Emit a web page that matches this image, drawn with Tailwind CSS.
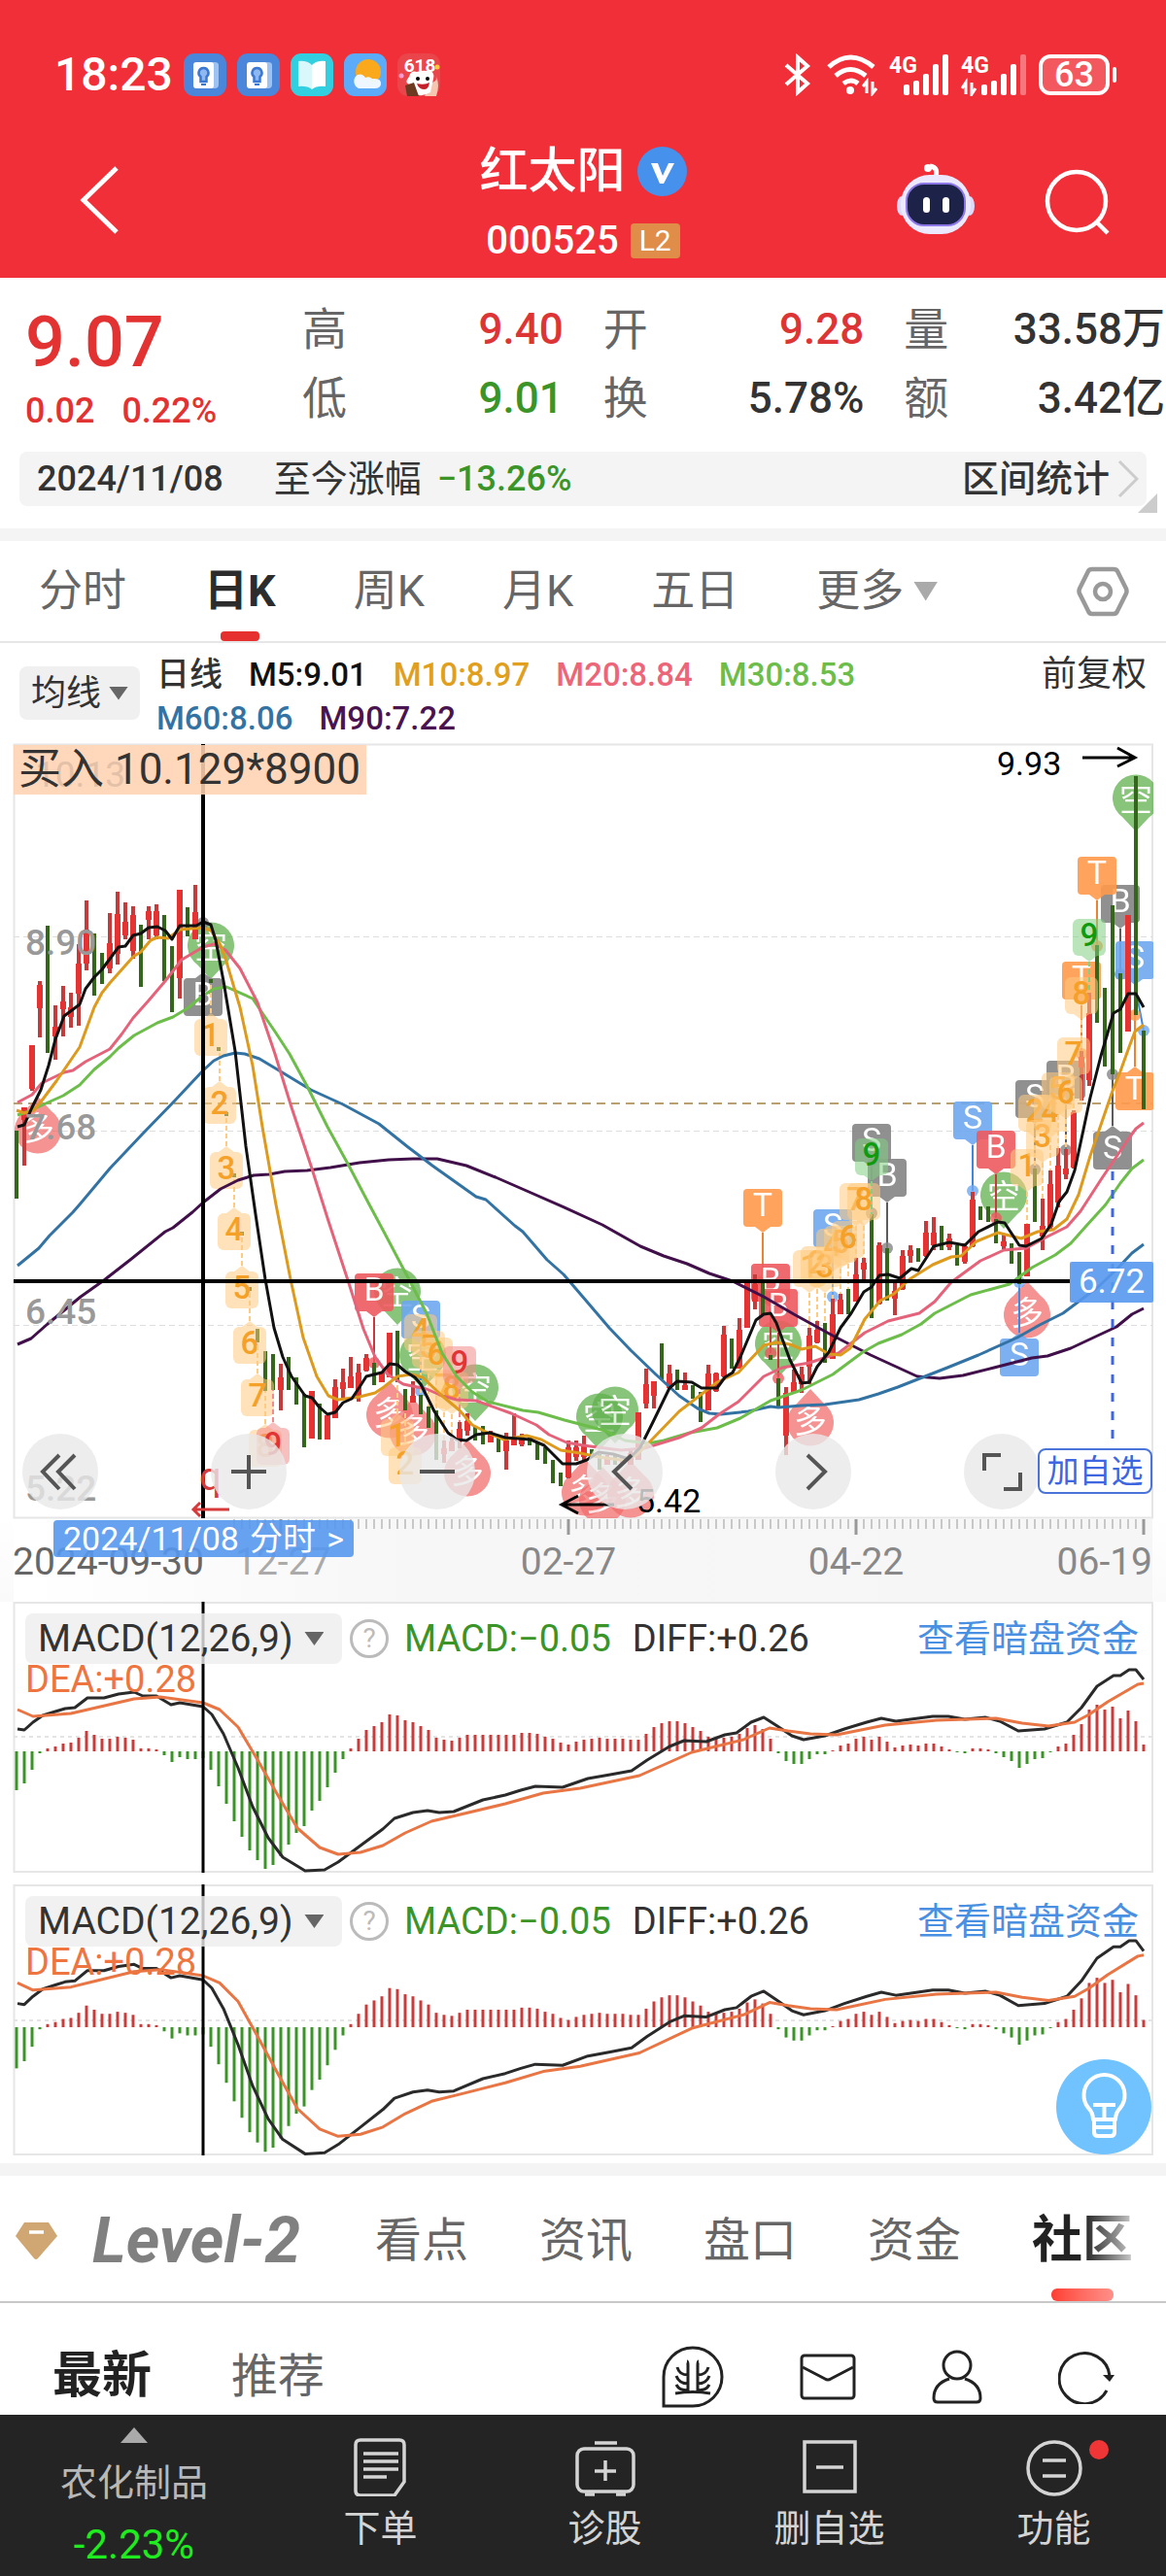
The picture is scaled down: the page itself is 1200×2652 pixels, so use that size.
<!DOCTYPE html>
<html lang="zh-CN">
<head>
<meta charset="utf-8">
<meta name="viewport" content="width=device-width, initial-scale=1">
<title>红太阳 000525</title>
<script src="https://cdn.jsdelivr.net/npm/@tailwindcss/browser@4"></script>
</head>
<body class="bg-white text-[#333] font-['Roboto','Noto_Sans_CJK_SC',sans-serif] overflow-x-hidden">

<header class="bg-[#f12f38] text-white h-[286px] flex flex-col">
  <div class="h-[152px] flex items-center justify-between pl-14 pr-[51px] pt-[2px]">
    <div class="flex items-center gap-[11px]">
      <span class="text-[48px] leading-[44px] font-medium">18:23</span>
      <svg class="size-11" viewBox="0 0 44 44"><rect width="44" height="44" rx="11" fill="#4a86da"/><path d="M14 9h18q4 0 4 3v20q0 4-4 4H14z" fill="#9cc3f3"/><rect x="10" y="9" width="21" height="27" rx="3" fill="#fff"/><path d="M20.500 15a5 5 0 0 0-3 9v5h6v-5a5 5 0 0 0-3-9z" fill="#8fb8f0" stroke="#3b78d2" stroke-width="2.500"/><path d="M18 32h5" stroke="#3b78d2" stroke-width="2"/></svg>
      <svg class="size-11" viewBox="0 0 44 44"><rect width="44" height="44" rx="11" fill="#4a86da"/><path d="M14 9h18q4 0 4 3v20q0 4-4 4H14z" fill="#9cc3f3"/><rect x="10" y="9" width="21" height="27" rx="3" fill="#fff"/><path d="M20.500 15a5 5 0 0 0-3 9v5h6v-5a5 5 0 0 0-3-9z" fill="#8fb8f0" stroke="#3b78d2" stroke-width="2.500"/><path d="M18 32h5" stroke="#3b78d2" stroke-width="2"/></svg>
      <svg class="size-11" viewBox="0 0 44 44"><rect width="44" height="44" rx="11" fill="#32cfe0"/><path d="M22 12q-5-5-14-4v26q9-1 14 3z" fill="#d8f8fc"/><path d="M22 12q5-5 14-4v26q-9-1-14 3z" fill="#fff"/></svg>
      <svg class="size-11" viewBox="0 0 44 44"><rect width="44" height="44" rx="11" fill="#5cabf8"/><circle cx="25" cy="19" r="13" fill="#fba91c"/><path d="M15 36a8 8 0 0 1-1-14q5-2 8 3 4-2 7 1 10-1 9 6-1 4-6 4z" fill="#eef7ff"/></svg>
      <svg class="size-11" viewBox="0 0 44 44"><rect width="44" height="44" rx="11" fill="#e9454a"/><path d="M33 30q8 0 7-6 4 8 0 20h-12z" fill="#f6c6b0"/><text x="23" y="19" font-size="19" font-weight="700" fill="#fff" text-anchor="middle">618</text><path d="M12 24q2-7 8-5 6-2 11-1 8 0 6 8l-3 14q-8 5-16 2l-4-10q-8-1-2-8z" fill="#fff"/><circle cx="21" cy="26" r="2"/><circle cx="31" cy="26" r="2"/><path d="M20 31q8 2 13-1-1 7-5 7-6 0-8-6z" fill="#c3202a"/><path d="M8 33l9-3 5 14H10z" fill="#6b3a20"/><circle cx="41" cy="14" r="2.500" fill="#ffc93b"/><circle cx="4" cy="23" r="2.500" fill="#ff9bd0"/></svg>
    </div>
    <div class="flex items-center gap-3">
      <svg class="w-8 h-11" viewBox="0 0 32 44" fill="none" stroke="#fff" stroke-width="4"><path d="M3 12l22 19-10 9V4l10 9L3 32"/></svg>
      <svg class="w-[53px] h-11" viewBox="0 0 53 44" fill="none" stroke="#fff" stroke-width="5"><path d="M3 14q22-20 46 0M10 23q15-13 31 0M18 31q8-6 15 0" /><circle cx="25" cy="38" r="4" fill="#fff" stroke="none"/><path d="M42 41V29l-4 5M48 29v12l4-5" stroke-width="3"/></svg>
      <svg class="w-[62px] h-11" viewBox="0 0 62 44" fill="#fff"><text x="0" y="20" font-size="23" font-weight="700">4G</text><rect x="15" y="32" width="6" height="11" rx="2"/><rect x="25" y="28" width="6" height="15" rx="2"/><rect x="35" y="21" width="6" height="22" rx="2"/><rect x="45" y="11" width="6" height="32" rx="2"/><rect x="55" y="1" width="6" height="42" rx="2"/></svg>
      <svg class="w-[68px] h-11" viewBox="0 0 68 44" fill="#fff"><text x="0" y="20" font-size="23" font-weight="700">4G</text><path d="M5 42V30l-4 6M11 30v12l4-6" stroke="#fff" stroke-width="3" fill="none"/><rect x="21" y="32" width="6" height="11" rx="2"/><rect x="31" y="28" width="6" height="15" rx="2"/><rect x="41" y="21" width="6" height="22" rx="2"/><rect x="51" y="11" width="6" height="32" rx="2"/><rect x="61" y="1" width="6" height="42" rx="2" fill-opacity=".35"/></svg>
      <div class="flex items-center gap-[3px]">
        <span class="w-[73px] h-[42px] rounded-xl border-4 border-white bg-white/20 flex items-center justify-center text-[36px] leading-none font-medium">63</span>
        <i class="w-1 h-4 rounded bg-white"></i>
      </div>
    </div>
  </div>
  <div class="flex-1 grid grid-cols-3 items-start">
    <button class="ml-[78px] mt-[18px] w-12 h-[72px]" aria-label="返回"><svg viewBox="0 0 48 72" fill="none" stroke="#fff" stroke-width="5"><path d="M42 3L8 36l34 33"/></svg></button>
    <div class="flex flex-col items-center">
      <h1 class="flex items-center gap-3 text-[50px] leading-[52px] font-medium -mt-[2px]">红太阳
        <svg class="size-[51px]" viewBox="0 0 51 51"><circle cx="25.500" cy="25.500" r="25.500" fill="#4691ec"/><path d="M14 17h7l5 13 6-13h6L27 38h-4z" fill="#fff"/></svg></h1>
      <p class="flex items-center gap-3 mt-5 text-[40px] leading-[52px] font-medium">000525 <span class="w-[51px] h-9 rounded-sm bg-[#e08d49] text-[30px] leading-9 font-normal text-center">L2</span></p>
    </div>
    <div class="flex justify-end gap-[70px] pr-[56px] mt-4">
      <button aria-label="智能助手"><svg class="w-[82px] h-[76px]" viewBox="0 0 82 76"><path d="M41 14q3-10-6-11" stroke="#fff" stroke-width="5" fill="none"/><circle cx="33" cy="5" r="4" fill="#fff"/><ellipse cx="6" cy="44" rx="5" ry="10" fill="#dcd9fb"/><ellipse cx="76" cy="44" rx="5" ry="10" fill="#dcd9fb"/><rect x="5" y="12" width="72" height="61" rx="30" fill="#ece9ff"/><rect x="11" y="21" width="60" height="43" rx="18" fill="#1d2348" stroke="#8d77e8" stroke-width="2"/><rect x="28" y="35" width="7" height="16" rx="3.500" fill="#fff"/><rect x="48" y="35" width="7" height="16" rx="3.500" fill="#fff"/></svg></button>
      <button aria-label="搜索" class="pt-[5px]"><svg class="size-[70px]" viewBox="0 0 70 70" fill="none" stroke="#fff" stroke-width="4.500"><circle cx="34" cy="33" r="30"/><path d="M55 55l11 11"/></svg></button>
    </div>
  </div>
</header>

<section class="flex h-[179px]">
  <div class="w-[311px] pl-[26px] pt-[29px] text-[#e23232]">
    <p class="text-[72px] leading-[76px] font-medium">9.07</p>
    <p class="text-[36px] leading-[40px] mt-3 flex gap-7 font-medium"><span>0.02</span><span>0.22%</span></p>
  </div>
  <dl class="flex-1 grid grid-cols-3 gap-x-[41px] content-start pt-[18px] pr-px text-[44px] leading-[71px] font-medium">
    <div class="flex justify-between"><dt class="text-[#666] text-[46px] font-normal">高</dt><dd class="text-[#dd3535]">9.40</dd></div>
    <div class="flex justify-between"><dt class="text-[#666] text-[46px] font-normal">开</dt><dd class="text-[#dd3535]">9.28</dd></div>
    <div class="flex justify-between"><dt class="text-[#666] text-[46px] font-normal">量</dt><dd>33.58万</dd></div>
    <div class="flex justify-between"><dt class="text-[#666] text-[46px] font-normal">低</dt><dd class="text-[#3a9427]">9.01</dd></div>
    <div class="flex justify-between"><dt class="text-[#666] text-[46px] font-normal">换</dt><dd>5.78%</dd></div>
    <div class="flex justify-between"><dt class="text-[#666] text-[46px] font-normal">额</dt><dd>3.42亿</dd></div>
  </dl>
</section>
<section class="relative mx-5 h-14 rounded-lg bg-[#f4f4f4] flex items-center pl-[18px] pr-2 text-[36px] font-medium">
  <span>2024/11/08</span><span class="ml-[52px] text-[38px] font-normal">至今涨幅</span><span class="ml-4 text-[#3a9427]">−13.26%</span>
  <a href="#" class="ml-auto flex items-center gap-2 text-[38px]">区间统计<svg class="w-[22px] h-10" viewBox="0 0 22 40" fill="none" stroke="#ccc" stroke-width="3"><path d="M2 2l18 18L2 38"/></svg></a>
  <i class="absolute -right-[11px] -bottom-[7px] size-5 bg-[#ccc] [clip-path:polygon(100%_0,100%_100%,0_100%)]"></i>
</section>
<div class="mt-[23px] h-[13px] bg-[#f4f4f4]"></div>

<nav class="h-[105px] border-b-2 border-[#e6e6e6] flex items-center gap-20 pl-10 pr-[38px] text-[45px] leading-[48px] text-[#666]">
  <a href="#">分时</a>
  <a href="#" class="relative h-full flex items-center font-bold text-[#2c2c2c]">日K<i class="absolute bottom-0 left-1/2 -translate-x-1/2 w-10 h-[10px] rounded bg-[#e6302f]"></i></a>
  <a href="#">周K</a><a href="#">月K</a><a href="#">五日</a>
  <a href="#" class="flex items-center gap-[10px]">更多<i class="w-[25px] h-5 bg-[#aaa] [clip-path:polygon(0_0,100%_0,50%_100%)]"></i></a>
  <button class="ml-auto" aria-label="设置"><svg class="w-[54px] h-[52px]" viewBox="0 0 54 52" fill="none" stroke="#999" stroke-width="4.500"><path d="M16 3h22q3 0 4 2l9 18q1 3 0 5l-9 18q-1 3-4 3H16q-3 0-4-3L3 28q-1-2 0-5l9-18q1-2 4-2z"/><circle cx="27" cy="26" r="8"/></svg></button>
</nav>

<section class="h-[103px] flex items-start pl-5 pr-[20px]">
  <button class="mt-6 w-[124px] h-[55px] rounded-lg bg-[#f0f0f0] flex items-center justify-center gap-2 text-[36px]">均线<i class="w-5 h-[14px] bg-[#666] [clip-path:polygon(0_0,100%_0,50%_100%)]"></i></button>
  <div class="ml-[17px] mt-[10px] flex-1 flex flex-wrap gap-x-[27px] text-[33px] leading-[45px] font-medium">
    <span class="text-[34px]">日线</span><span class="text-[#111]">M5:9.01</span><span class="text-[#e0a01e]">M10:8.97</span><span class="text-[#ec6578]">M20:8.84</span><span class="text-[#6cbd4a]">M30:8.53</span>
    <i class="basis-full h-0"></i>
    <span class="text-[#3373a4]">M60:8.06</span><span class="text-[#4a1450]">M90:7.22</span>
  </div>
  <button class="mt-[10px] text-[36px] leading-[45px]">前复权</button>
</section>

<main>
  <section class="relative bg-linear-to-b from-white from-90% to-[#fafafa]">
    <svg id="kline" class="block w-full h-auto" viewBox="0 765 1200 884" role="img" aria-label="日K线图">
      <defs>
        <linearGradient id="rulerFade" x1="0" x2="1"><stop offset="0" stop-color="#fff"/><stop offset=".35" stop-color="#f7f7f7"/><stop offset="1" stop-color="#f6f6f6"/></linearGradient>
        <clipPath id="plot"><rect x="14" y="766" width="1173" height="797"/></clipPath>
      </defs>
      <rect x="14" y="1564" width="1172" height="85" fill="url(#rulerFade)"/>
      <rect x="14.500" y="766.500" width="1171.500" height="796" fill="#fff" stroke="#e6e6e6" stroke-width="2"/>
      <g stroke="#dedede" stroke-dasharray="6 4"><path d="M14 964.500H1186M14 1164.500H1186M14 1364.500H1186"/></g>
      <path d="M14 1136H1186" stroke="#b9a070" stroke-width="2" stroke-dasharray="9 6"/>
      <g id="plotLayer" clip-path="url(#plot)"></g>
      <g font-size="37" font-weight="500" fill="#999"><text x="26" y="983">8.90</text><text x="26" y="1173">7.68</text><text x="26" y="1363">6.45</text><text x="26" y="1545">5.22</text></g>
      <path d="M1145 1206V1491" stroke="#3e66e0" stroke-width="3" stroke-dasharray="9 10"/>
      <g fill="none" stroke="#000"><path d="M209 766V1563" stroke-width="4"/><path d="M14 1319H1101" stroke-width="4"/><path d="M1114 780h54M1150 770l18 10-18 9M578 1549h54M595 1540l-17 9 17 9" stroke-width="3"/></g>
      <path d="M199 1554h37M206 1547l-7 7 7 7" stroke="#d63a3a" stroke-width="3" fill="none"/>
      <text x="205" y="1534" font-size="40" fill="#d63a3a">q</text>
      <rect x="14" y="767" width="363" height="51" fill="#ffd2b0" fill-opacity=".88"/>
      <text x="36" y="810" font-size="37" fill="#e3c0a8">10.13</text>
      <text x="19" y="807" font-size="44" fill="#333">买入 10.129*8900</text>
      <g font-size="34" fill="#000"><text x="1026" y="798">9.93</text><text x="655" y="1557">5.42</text></g>
      <rect x="1101" y="1299" width="86" height="42" rx="2" fill="#5698ee" fill-opacity=".9"/>
      <text x="1144" y="1331" font-size="35" fill="#fff" text-anchor="middle">6.72</text>
      <g id="ruler"></g>
      <g font-size="39" fill="#888"><text x="13" y="1621" fill="#666">2024-09-30</text><text x="242" y="1621" fill="#aaa">12-27</text><text x="585" y="1621" text-anchor="middle">02-27</text><text x="881" y="1621" text-anchor="middle">04-22</text><text x="1186" y="1621" text-anchor="end">06-19</text></g>
    </svg>
    <a href="#" class="absolute left-[55px] top-[800px] w-[309px] h-[38px] rounded-sm bg-[#5698ee]/90 text-white text-[34px] leading-[38px] flex justify-between px-[10px]"><span>2024/11/08</span><span>分时</span><span>&gt;</span></a>
    <div class="absolute left-[23px] right-[130px] top-[711px] flex justify-between text-[#555]">
      <button class="size-[78px] rounded-full bg-[#e8e8e8]/80" aria-label="最左"><svg viewBox="0 0 78 78" fill="none" stroke="currentColor" stroke-width="4"><path d="M38 22L21 39l17 18M54 22L37 39l17 18"/></svg></button>
      <button class="size-[78px] rounded-full bg-[#e8e8e8]/80" aria-label="放大"><svg viewBox="0 0 78 78" fill="none" stroke="currentColor" stroke-width="4"><path d="M39 22v35M21 39h36"/></svg></button>
      <button class="size-[78px] rounded-full bg-[#e8e8e8]/80" aria-label="缩小"><svg viewBox="0 0 78 78" fill="none" stroke="currentColor" stroke-width="4"><path d="M21 39h36"/></svg></button>
      <button class="size-[78px] rounded-full bg-[#e8e8e8]/80" aria-label="向左"><svg viewBox="0 0 78 78" fill="none" stroke="currentColor" stroke-width="4"><path d="M46 22L28 39l18 18"/></svg></button>
      <button class="size-[78px] rounded-full bg-[#e8e8e8]/80" aria-label="向右"><svg viewBox="0 0 78 78" fill="none" stroke="currentColor" stroke-width="4"><path d="M33 22l18 17-18 18"/></svg></button>
      <button class="size-[78px] rounded-full bg-[#e8e8e8]/80" aria-label="全屏"><svg viewBox="0 0 78 78" fill="none" stroke="currentColor" stroke-width="4"><path d="M21 38V22h17M58 40v17H41"/></svg></button>
    </div>
    <button class="absolute right-[14px] top-[726px] w-[118px] h-[47px] rounded-lg border-2 border-[#4a74d8] bg-white text-[#3e66e0] text-[33px] leading-10 flex items-center justify-center">加自选</button>
  </section>

  <section class="relative">
    <svg class="macd block w-full h-auto" data-scale="1" data-zero="154" data-mid="139" viewBox="0 0 1200 279" role="img" aria-label="MACD"></svg>
    <div class="absolute inset-x-0 top-3 pl-[26px] pr-[28px] text-[38px] leading-[52px]">
      <div class="flex items-center">
        <button class="w-[326px] h-[52px] rounded-lg bg-[#eee]/80 flex items-center gap-3 pl-[13px] text-[39px]">MACD(12,26,9)<i class="w-5 h-[14px] bg-[#666] [clip-path:polygon(0_0,100%_0,50%_100%)]"></i></button>
        <button class="ml-2 size-10 rounded-full border-3 border-[#bbb] text-[#bbb] text-[28px] leading-8">?</button>
        <span class="ml-4 text-[#3a9427]">MACD:−0.05</span><span class="ml-[22px]">DIFF:+0.26</span>
        <a href="#" class="ml-auto text-[#4a90e2]">查看暗盘资金</a>
      </div>
      <p class="leading-8 text-[#ee7440]">DEA:+0.28</p>
    </div>
  </section>
  <section class="relative mt-3">
    <svg class="macd block w-full h-auto" data-scale="1.06" data-zero="147" data-mid="140" viewBox="0 0 1200 279" role="img" aria-label="MACD"></svg>
    <div class="absolute inset-x-0 top-3 pl-[26px] pr-[28px] text-[38px] leading-[52px]">
      <div class="flex items-center">
        <button class="w-[326px] h-[52px] rounded-lg bg-[#eee]/80 flex items-center gap-3 pl-[13px] text-[39px]">MACD(12,26,9)<i class="w-5 h-[14px] bg-[#666] [clip-path:polygon(0_0,100%_0,50%_100%)]"></i></button>
        <button class="ml-2 size-10 rounded-full border-3 border-[#bbb] text-[#bbb] text-[28px] leading-8">?</button>
        <span class="ml-4 text-[#3a9427]">MACD:−0.05</span><span class="ml-[22px]">DIFF:+0.26</span>
        <a href="#" class="ml-auto text-[#4a90e2]">查看暗盘资金</a>
      </div>
      <p class="leading-8 text-[#ee7440]">DEA:+0.28</p>
    </div>
    <button class="absolute right-[15px] bottom-px size-[98px] rounded-full bg-[#70c3ff]" aria-label="提示"><svg viewBox="0 0 98 98" fill="none" stroke="#fff" stroke-width="4"><path d="M38 62q0-7-5-12a21 21 0 1 1 33 0q-5 5-5 12zM39 62v13q0 4 4 4h13q4 0 4-4V62M40 70h19M38 47h23M49.500 47v15" stroke-linejoin="round"/></svg></button>
  </section>
</main>
<div class="mt-2 h-[13px] bg-[#f4f4f4]"></div>

<nav class="h-[131px] border-b-2 border-[#c8c8c8] flex items-center justify-between pl-4 pr-[34px] pt-1 text-[48px] text-[#666]">
  <a href="#" class="flex items-center gap-9"><svg class="w-[43px] h-10" viewBox="0 0 43 40"><path d="M9 1h25l9 14-20 23q-2 2-4 0L0 15z" fill="#d0a772"/><path d="M14 11h15" stroke="#fff" stroke-width="3.500"/></svg><span class="w-[218px] text-[66px] leading-[66px] italic font-bold text-[#808080]">Level-2</span></a>
  <a href="#">看点</a><a href="#">资讯</a><a href="#">盘口</a><a href="#">资金</a>
  <a href="#" class="relative h-full flex items-center text-[52px] font-bold"><span class="bg-linear-to-r from-[#222] from-50% to-[#ccc] bg-clip-text text-transparent">社区</span><i class="absolute bottom-0 left-5 w-16 h-[13px] rounded-md bg-linear-to-r from-[#ff3b32] to-[#ff8f89]"></i></a>
</nav>
<section class="h-[115px] flex items-center pl-[54px] pr-[53px] pt-9 text-[48px] text-[#666] overflow-hidden">
  <a href="#" class="text-[51px] font-bold text-[#222]">最新</a><a href="#" class="ml-[82px]">推荐</a>
  <div class="ml-auto flex items-center gap-[78px] text-[#222]">
    <button aria-label="种草"><svg class="size-16" viewBox="0 0 64 64" fill="none" stroke="currentColor" stroke-width="3"><path d="M2 62V32a30 30 0 1 1 30 30z"/><path d="M14 49q18-3 36 0M27 48V20q0-4-1-4M37 48V20q0-4 1-4M27 30q-9 0-11-8M27 39q-9 0-12-8M27 46q-9 0-12-6M37 30q9 0 11-8M37 39q9 0 12-8M37 46q9 0 12-6"/></svg></button>
    <button aria-label="消息"><svg class="w-[58px] h-12" viewBox="0 0 58 48" fill="none" stroke="currentColor" stroke-width="3"><rect x="2" y="2" width="54" height="44" rx="3"/><path d="M3 14l23 12q3 2 6 0l23-12"/></svg></button>
    <button aria-label="我的"><svg class="w-[52px] h-14" viewBox="0 0 52 56" fill="none" stroke="currentColor" stroke-width="3"><circle cx="26" cy="16" r="14"/><path d="M18 30Q2 35 2 50q0 4 4 4h40q4 0 4-4 0-15-16-20"/></svg></button>
    <button aria-label="刷新"><svg class="w-[58px] h-14" viewBox="0 0 58 56" fill="none" stroke="currentColor" stroke-width="3"><path d="M50 42a26 26 0 1 1 3-15"/><path d="M46 26h12l-5 7z" fill="currentColor" stroke="none"/></svg></button>
  </div>
</section>

<footer class="h-[166px] bg-[#242424] text-[#d4d4d4] grid grid-cols-[23fr_77fr] text-[38px] leading-[50px]">
  <a href="#" class="flex flex-col items-center pt-[13px]">
    <i class="w-7 h-4 bg-[#aaa] [clip-path:polygon(50%_0,100%_100%,0_100%)]"></i>
    <span class="mt-4 text-[#b8b8b8]">农化制品</span><span class="mt-[14px] text-[42px] text-[#1eec1e]">-2.23%</span>
  </a>
  <div class="grid grid-cols-4">
    <button class="flex flex-col items-center pt-6 gap-2"><svg class="size-[60px]" viewBox="0 0 60 60" fill="none" stroke="currentColor" stroke-width="3.500"><path d="M9 2h40q5 0 5 5v38L44 59H9q-5 0-5-5V7q0-5 5-5zM12 16h36M12 24h36M12 32h36M12 40h24"/></svg><span>下单</span></button>
    <button class="flex flex-col items-center pt-6 gap-2"><svg class="w-[62px] h-[60px]" viewBox="0 0 62 60" fill="none" stroke="currentColor" stroke-width="3.500"><rect x="2" y="11" width="58" height="44" rx="7"/><path d="M31 23v21M20 34h22M20 5h23M10 58h10M42 58h10"/></svg><span>诊股</span></button>
    <button class="flex flex-col items-center pt-6 gap-2"><svg class="size-[60px]" viewBox="0 0 60 60" fill="none" stroke="currentColor" stroke-width="3.500"><path d="M4 4h52v51H4zM16 30h28"/></svg><span>删自选</span></button>
    <button class="relative flex flex-col items-center pt-6 gap-2"><svg class="size-[60px]" viewBox="0 0 60 60" fill="none" stroke="currentColor" stroke-width="3.500"><circle cx="30" cy="31" r="27"/><path d="M18 23h24M18 39h24"/></svg><span>功能</span><i class="absolute left-1/2 ml-9 top-[26px] size-5 rounded-full bg-[#ef3535]"></i></button>
  </div>
</footer>

<script>
const NS = 'http://www.w3.org/2000/svg';
function el(parent, tag, attrs, text) {
  const n = document.createElementNS(NS, tag);
  for (const k in attrs) n.setAttribute(k, attrs[k]);
  if (text != null) n.textContent = text;
  parent.appendChild(n);
  return n;
}
const X = i => 17 + 8 * i;
const RED = '#e53333', WICK = '#c43b3b', GREEN = '#34661c';

// Candles: index, wick top, wick bottom, and for rising days body top and bottom
const candles = [
[0,1164,1234],[1,1140,1200,1140,1153],[2,1076,1123,1076,1121],[3,1010,1068,1014,1038],[4,953,1084],[5,1035,1091,1057,1067],[6,1015,1067,1031,1039],[7,1022,1058,1037,1047],[8,972,1056,992,1023],[9,927,999,957,992],[10,961,1025],[11,981,1013],[12,940,1002,971,997],[13,918,993,941,982],[14,929,967,949,963],[15,933,987,942,979],[16,952,1016],[17,933,967,938,947],[18,931,967,938,963],[19,942,1010],[20,974,1042],[21,916,1028,916,1007],[22,934,964],[23,911,967,939,967],[24,883,937],[25,1008,1012],[26,1078,1082],[27,1145,1149],[28,1208,1212],[29,1268,1272],[30,1325,1329],
[31,1368,1382],[32,1391,1432],[33,1394,1431],[34,1404,1452,1418,1431],[35,1397,1431],[36,1418,1446],[37,1435,1490],[38,1432,1481,1432,1481],[39,1445,1482],[40,1457,1482,1457,1482],[41,1420,1460,1428,1460],[42,1409,1439,1423,1430],[43,1397,1429,1417,1429],[44,1404,1443,1413,1437],[45,1394,1412,1398,1411],[46,1403,1426],[47,1412,1423,1412,1423],[48,1372,1418,1372,1418],[49,1370,1423],[50,1430,1452],[51,1422,1444,1437,1444],[52,1436,1456],[53,1448,1470],[54,1452,1503],[55,1483,1506,1491,1497],[56,1480,1494,1484,1494],[57,1464,1491,1471,1482],[58,1455,1478,1463,1473],[59,1468,1483],[60,1468,1487],[61,1473,1485,1475,1485],[62,1477,1495],[63,1475,1513,1483,1494],[64,1455,1488,1482,1488],[65,1476,1489,1480,1487],[66,1480,1488],[67,1486,1503],[68,1490,1507],[69,1503,1527],[70,1516,1530],[71,1483,1522,1490,1521],[72,1483,1504,1490,1500],[73,1478,1503,1488,1500],
[74,1492,1498],[75,1497,1513],[76,1498,1508,1500,1508],[77,1497,1508],[78,1500,1507,1500,1507],[79,1493,1508,1496,1508],[80,1454,1503,1454,1503],[81,1409,1450,1425,1445],[82,1422,1450,1422,1437],[83,1383,1420],[84,1405,1430,1414,1429],[85,1410,1431],[86,1413,1431,1426,1431],[87,1426,1440],[88,1433,1464],[89,1405,1452,1414,1452],[90,1413,1433,1414,1432],[91,1365,1418,1374,1417],[92,1378,1409],[93,1357,1409,1369,1409],[94,1320,1367,1320,1367],[95,1312,1348,1322,1340],[96,1317,1353],[97,1395,1400],[98,1419,1448],[99,1428,1498,1434,1478],[100,1410,1434,1423,1433],[101,1407,1434,1415,1425],[102,1367,1425,1375,1407],[103,1360,1383,1369,1382],[104,1362,1403],[105,1337,1399,1353,1399],[106,1332,1353,1338,1353],[107,1327,1353],[108,1295,1340,1312,1340],[109,1295,1318,1300,1307],[110,1250,1357],[111,1279,1343,1282,1342],[112,1285,1339],[113,1320,1354,1329,1337],[114,1287,1328,1293,1327],[115,1282,1300,1287,1293],[116,1285,1299],[117,1257,1294,1269,1293],[118,1253,1287,1269,1282],[119,1262,1287],[120,1270,1287,1275,1284],[121,1282,1303],[122,1280,1301,1283,1299],[123,1227,1284,1235,1283],[124,1242,1256],[125,1242,1258],[126,1255,1280],[127,1271,1286,1278,1283],[128,1280,1301],[129,1289,1322],[130,1260,1314,1260,1314],[131,1203,1258],[132,1234,1287,1262,1273],[133,1205,1265,1219,1263],[134,1182,1243,1200,1238],[135,1183,1214,1203,1209],[136,1143,1203,1145,1202],
[137,1082,1133,1088,1099],[138,1022,1118,1043,1112],[139,973,1053],[140,1017,1098],[141,932,1106],[142,1002,1084],[143,942,1062,942,1062],[144,799,1045],[145,1061,1142]];

const plot = document.getElementById('plotLayer');
const FLAG = { red:'#ee5a60', grey:'#858585', blue:'#6ea8f0', orange:'#ff9a4c' };
const STEM = { red:'#c8383c', grey:'#5c5c5c', blue:'#3f88e0', orange:'#e88433' };

// Day count tags: centre x, top, digit, pointer direction, stem end, tone
const counts = [
[217,1049,1,-1,1012],[226,1119,2,-1,1082],[233,1186,3,-1,1149],[241,1249,4,-1,1212],[249,1309,5,-1,1272],[257,1366,6,-1,1329],[265,1420,7,-1,1382],[273,1472,8,-1,1432],[281,1470,9,-1,1431,'r'],
[409,1461,1,-1,1423],[417,1490,2,-1,1452],[433,1353,4,1,1436],[441,1370,5,1,1448],[449,1377,6,1,1452],[457,1410,7,1,1483],[465,1412,8,1,1480],[473,1386,9,1,1464,'r'],
[833,1287,1,1,1367],[841,1283,2,1,1360],[849,1287,3,1,1362],[857,1265,4,1,1337],[865,1262,5,1,1332],[873,1257,6,1,1327],[881,1218,7,1,1295],[889,1218,8,1,1295],[897,1172,9,1,1250,'g'],
[1057,1183,1,1,1260],[1065,1127,2,1,1203],[1073,1153,3,1,1234],[1081,1127,4,1,1205],[1089,1104,5,1,1182],[1097,1108,6,1,1183],[1105,1068,7,1,1143],[1113,1006,8,1,1082],[1121,946,9,1,1022,'g']];
const balloons = [
['空',217,975],['空',409,1331],['空',435,1397],['空',489,1430],['空',617,1460],['空',633,1453],['空',801,1385],['空',1033,1232],['空',1169,823],
['多',39,1162],['多',401,1455],['多',425,1473],['多',481,1515],['多',602,1535],['多',620,1543],['多',649,1537],['多',834,1463],['多',1057,1352]];
const flags = [
[209,1007,'B','grey',-1,950],[385,1311,'B','red',1,1403],[433,1339,'S','blue',1,1432],[785,1224,'T','orange',1,1318],[793,1301,'B','red',1,1393],[801,1327,'B','red',1,1419],[857,1245,'S','blue',1,1335],[897,1157,'S','grey',1,1249],[913,1193,'B','grey',1,1285],[1001,1134,'S','blue',1,1226],[1025,1164,'B','red',1,1254],[1065,1112,'S','grey',1,1204],[1097,1092,'B','grey',1,1184],[1113,990,'T','orange',1,1085],[1153,911,'B','grey',1,1003],[1129,882,'T','orange',1,974],[1168,969,'S','blue',1,1061,1177],[1168,1104,'T','orange',-1,1045],[1145,1165,'S','grey',-1,1106],[1049,1378,'S','blue',-1,1320]];

for (const [ch, x, y] of balloons) {
  const s = ch === '多' ? -1 : 1, c = ch === '多' ? '#f26d6d' : '#5fb04d';
  const g = el(plot, 'g', { opacity:.74 });
  el(g, 'path', { d:`M${x-14} ${y+s*18}L${x} ${y+s*33}L${x+14} ${y+s*18}A24 24 0 1 ${s > 0 ? 0 : 1} ${x-14} ${y+s*18}z`, fill:c });
  el(g, 'text', { x, y:y+12, 'font-size':34, fill:'#fff', 'text-anchor':'middle' }, ch);
}
for (const [x, y, t, col, dir, end, ex] of flags) {
  const a = dir > 0 ? y + 45 : y - 6, b = dir > 0 ? y + 39 : y;
  el(plot, 'path', { d:`M${x} ${a}L${ex || x} ${end}`, stroke:STEM[col], 'stroke-width':2 });
  el(plot, 'circle', { cx:ex || x, cy:end, r:6, fill:FLAG[col], opacity:.8 });
  const g = el(plot, 'g', { opacity:.9 });
  el(g, 'rect', { x:x-20, y, width:40, height:39, rx:4, fill:FLAG[col] });
  el(g, 'path', { d:`M${x-8} ${b}L${x} ${a}L${x+8} ${b}z`, fill:FLAG[col] });
  el(g, 'text', { x, y:y+28, 'font-size':34, fill:'#fff', 'text-anchor':'middle' }, t);
}
for (const [i, hi, lo, t, b] of candles) {
  const up = t != null;
  el(plot, 'path', { d:`M${X(i)} ${hi}V${lo}`, stroke:up ? WICK : GREEN, 'stroke-width':4 });
  if (up) el(plot, 'rect', { x:X(i)-3, y:t, width:6, height:b-t, fill:RED });
}
for (const [x, y, t, dir, end, tone] of counts) {
  const bg = tone === 'r' ? '#f28b8b' : tone === 'g' ? '#82d082' : '#ffcb80';
  const fg = tone === 'r' ? '#e23434' : tone === 'g' ? '#109a10' : '#f5a028';
  const a = dir > 0 ? y + 44 : y - 6, b = dir > 0 ? y + 38 : y;
  el(plot, 'path', { d:`M${x} ${a}V${end}`, stroke:bg, 'stroke-width':2, 'stroke-dasharray':'5 3' });
  el(plot, 'rect', { x:x-17, y, width:34, height:38, rx:6, fill:bg, opacity:.55 });
  el(plot, 'path', { d:`M${x-8} ${b}L${x} ${a}L${x+8} ${b}z`, fill:bg, opacity:.55 });
  el(plot, 'text', { x, y:y+28, 'font-size':33, 'font-weight':500, fill:fg, 'text-anchor':'middle' }, t);
}

// Moving averages
const averages = {
'#41104a':'18,1384 32,1378 49,1363 83,1335 107,1318 134,1297 170,1268 178,1264 198,1248 209,1238 227,1224 245,1215 261,1210 277,1209 293,1206 316,1205 340,1202 370,1197 400,1194 425,1193 450,1193 480,1200 510,1212 542,1226 581,1243 620,1261 659,1283 683,1293 707,1301 730,1311 754,1319 786,1335 817,1353 857,1375 896,1395 944,1417 967,1419 991,1416 1023,1408 1062,1398 1078,1396 1102,1388 1134,1373 1149,1366 1165,1353 1177,1347',
'#3373a4':'18,1303 40,1285 51,1272 75,1248 82,1240 113,1203 147,1167 180,1133 209,1102 220,1092 230,1087 242,1084 252,1085 267,1090 287,1102 320,1122 353,1137 390,1157 420,1181 445,1200 490,1232 500,1235 530,1262 538,1268 563,1297 580,1312 604,1340 627,1367 649,1390 675,1415 699,1437 718,1450 730,1455 742,1456 770,1453 793,1448 801,1449 825,1447 849,1446 884,1441 904,1435 924,1428 952,1417 975,1408 1007,1395 1047,1377 1070,1364 1094,1352 1110,1340 1130,1325 1149,1307 1165,1290 1177,1281',
'#6cbd4a':'18,1148 27,1145 65,1128 82,1117 97,1101 113,1088 122,1079 138,1066 162,1053 178,1047 193,1038 209,1025 220,1018 233,1016 260,1028 268,1040 283,1062 298,1085 317,1120 337,1160 359,1200 380,1240 395,1268 425,1325 439,1352 455,1393 470,1417 486,1433 502,1443 538,1452 554,1454 581,1462 623,1473 643,1483 667,1486 683,1483 710,1475 738,1470 762,1460 793,1442 825,1431 857,1415 888,1392 904,1383 928,1374 948,1363 962,1352 999,1333 1039,1322 1062,1305 1086,1292 1102,1280 1118,1262 1138,1240 1153,1218 1165,1203 1177,1194',
'#e5637a':'18,1135 33,1127 43,1115 66,1104 75,1102 88,1093 113,1080 125,1065 137,1048 153,1030 170,1010 187,988 209,975 220,972 232,978 247,997 265,1032 283,1085 300,1140 320,1200 338,1257 358,1318 374,1368 386,1397 399,1415 415,1425 439,1430 455,1437 470,1441 490,1442 526,1455 552,1467 565,1477 583,1485 600,1488 639,1493 663,1491 699,1480 722,1470 740,1456 760,1443 786,1417 805,1408 833,1403 863,1393 890,1372 914,1360 946,1352 962,1340 979,1320 1009,1298 1033,1287 1056,1285 1078,1273 1098,1263 1112,1247 1134,1213 1161,1173 1169,1162 1177,1156',
'#dd9a1c':'17,1143 25,1146 35,1143 43,1133 58,1113 82,1078 97,1037 105,1022 113,1012 137,985 145,980 155,968 162,965 173,966 185,957 209,955 217,958 227,973 233,990 247,1037 260,1097 270,1160 284,1240 299,1317 312,1377 326,1417 338,1437 348,1441 370,1438 386,1434 395,1428 409,1417 423,1415 435,1418 455,1437 473,1452 486,1467 502,1475 518,1482 542,1478 557,1482 577,1493 597,1496 616,1500 639,1503 655,1498 671,1482 699,1453 738,1423 760,1413 770,1402 786,1385 799,1382 813,1384 825,1389 839,1386 853,1394 865,1395 875,1388 890,1358 906,1339 920,1332 936,1317 960,1302 979,1294 989,1293 1005,1278 1027,1269 1051,1275 1068,1268 1084,1266 1098,1255 1110,1230 1122,1190 1145,1123 1153,1103 1162,1078 1168,1062 1177,1055',
'#111':'18,1160 25,1158 33,1140 42,1122 50,1097 57,1070 66,1046 82,1034 88,1018 97,1006 105,998 122,975 129,974 137,963 145,961 153,955 162,954 170,958 177,967 185,953 202,953 209,949 217,952 222,968 230,1010 242,1082 253,1180 263,1250 273,1317 282,1367 291,1397 300,1417 314,1437 321,1439 328,1448 337,1456 345,1454 353,1444 362,1440 370,1428 377,1417 393,1413 401,1404 409,1405 417,1412 427,1418 433,1425 447,1453 461,1475 470,1482 480,1483 490,1477 504,1475 520,1480 546,1482 560,1488 569,1497 579,1507 593,1507 604,1503 616,1495 631,1497 647,1502 659,1490 673,1462 689,1429 697,1422 712,1423 722,1429 738,1429 746,1418 754,1413 762,1397 778,1359 786,1353 793,1352 799,1362 813,1400 825,1424 833,1423 841,1407 853,1392 865,1367 876,1352 889,1330 897,1325 905,1313 914,1312 926,1316 938,1306 945,1308 961,1283 977,1279 993,1282 1007,1268 1027,1258 1034,1259 1049,1282 1056,1283 1072,1275 1082,1260 1090,1237 1098,1227 1106,1205 1115,1163 1122,1130 1133,1087 1146,1043 1153,1039 1161,1023 1169,1023 1177,1037' };
for (const c in averages) el(plot, 'polyline', { points:averages[c], fill:'none', stroke:c, 'stroke-width':3, 'stroke-linejoin':'round' });

const ruler = document.getElementById('ruler');
for (let i = 28; i < 146; i++) {
  const big = (i - 34) % 37 === 0;
  el(ruler, 'path', { d:`M${X(i)} 1564V${big ? 1580 : 1574}`, stroke:'#999', 'stroke-width':big ? 3 : 1 });
}

// MACD panels: histogram heights and the two lines
const hist = [-40,-33,-19,-2,3,5,8,9,14,21,17,13,13,15,14,12,3,3,2,-4,-11,-6,-8,-8,-7,-19,-36,-54,-72,-88,-102,-112,-121,-117,-108,-96,-84,-77,-61,-51,-37,-22,-8,3,13,22,26,30,38,37,32,30,26,22,14,12,11,14,17,17,17,17,17,17,17,19,19,18,15,13,9,7,10,12,13,14,13,13,13,12,12,18,25,29,31,31,29,25,21,15,14,14,15,18,24,27,23,13,-2,-10,-13,-13,-8,-3,-3,1,6,8,13,15,12,15,10,4,6,7,6,8,8,5,2,-1,-2,3,3,2,-2,-6,-10,-17,-13,-8,-7,-1,5,8,17,28,43,48,43,46,34,42,31,7];
const diff = '18,1780 25,1781 34,1773 44,1766 57,1762 67,1759 77,1758 90,1748 107,1748 122,1744 138,1742 147,1746 161,1746 176,1755 185,1753 209,1757 218,1765 230,1785 245,1820 260,1860 276,1892 291,1912 314,1926 334,1925 348,1917 371,1900 394,1883 406,1872 425,1866 440,1864 452,1866 467,1865 497,1853 520,1848 536,1843 551,1839 579,1840 605,1831 628,1827 650,1823 666,1812 689,1798 704,1792 727,1793 746,1786 758,1784 773,1773 786,1768 800,1777 815,1787 827,1791 849,1787 869,1780 892,1773 907,1769 922,1772 960,1767 976,1767 993,1770 1014,1768 1029,1772 1048,1782 1075,1780 1098,1773 1113,1758 1129,1736 1146,1725 1153,1725 1162,1719 1169,1719 1177,1729';
const dea = '18,1760 34,1767 73,1764 99,1758 138,1749 165,1747 187,1750 209,1753 226,1760 245,1778 264,1810 287,1850 306,1882 329,1902 348,1909 371,1907 394,1900 417,1887 444,1875 478,1867 520,1857 559,1846 597,1841 658,1828 712,1804 765,1791 792,1779 811,1782 834,1785 861,1786 911,1776 964,1771 1025,1769 1052,1774 1079,1777 1106,1773 1121,1765 1140,1752 1171,1734 1177,1733';
document.querySelectorAll('.macd').forEach(svg => {
  const k = +svg.dataset.scale, z = +svg.dataset.zero;
  const scaled = s => s.split(' ').map(p => { const [x, y] = p.split(','); return x + ',' + (z + (y - 1803) * k); }).join(' ');
  el(svg, 'rect', { x:14.5, y:1, width:1171.5, height:277, fill:'#fff', stroke:'#e6e6e6', 'stroke-width':2 });
  el(svg, 'path', { d:`M14 ${svg.dataset.mid}H1186`, stroke:'#e4e4e4', 'stroke-width':2, 'stroke-dasharray':'4 4' });
  hist.forEach((v, i) => el(svg, 'path', { d:`M${X(i)} ${z}V${z - v * k}`, stroke:v > 0 ? '#c83c3c' : '#3a9427', 'stroke-width':3 }));
  el(svg, 'polyline', { points:scaled(diff), fill:'none', stroke:'#2a2a2a', 'stroke-width':3, 'stroke-linejoin':'round' });
  el(svg, 'polyline', { points:scaled(dea), fill:'none', stroke:'#e87543', 'stroke-width':3, 'stroke-linejoin':'round' });
  el(svg, 'path', { d:'M209 0V279', stroke:'#000', 'stroke-width':3 });
});
</script>
</body>
</html>
